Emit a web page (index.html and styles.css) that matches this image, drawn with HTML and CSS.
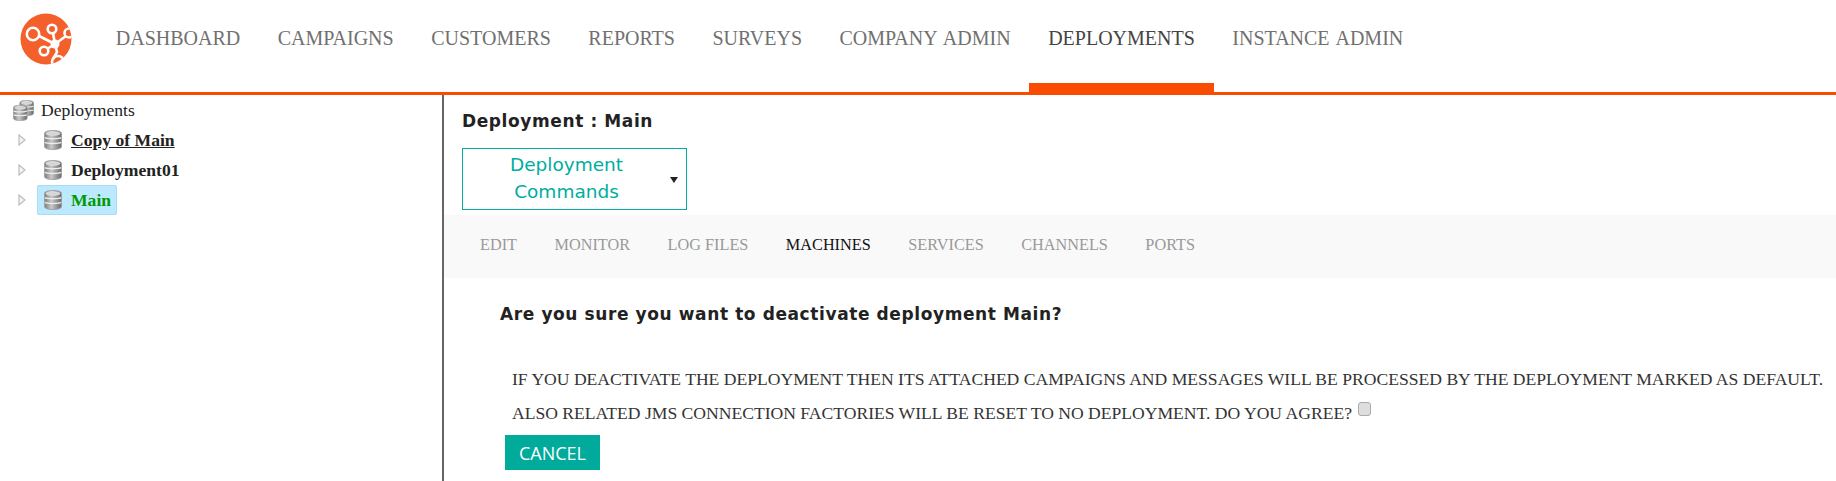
FILE: index.html
```html
<!doctype html>
<html lang="en">
<head>
    <meta charset="UTF-8">
    <title>Deployments</title>
    <link rel="stylesheet" href="styles.css">
</head>
<body>
    <svg width="0" height="0" class="defs">
        <defs>
            <linearGradient id="dbGrad" x1="0" x2="1" y1="0" y2="0">
                <stop offset="0" stop-color="#7c7c7c"/>
                <stop offset="0.4" stop-color="#c9c9c9"/>
                <stop offset="1" stop-color="#6a6a6a"/>
            </linearGradient>
            <g id="dbIcon">
                <path d="M.5 3.500C.5 1.500 4 .5 9 .5s8.500 1 8.500 3v13c0 2-3.500 3-8.500 3s-8.500-1-8.500-3z" fill="url(#dbGrad)" stroke="#9a9a9a" stroke-width=".8"/>
                <ellipse cx="9" cy="3.500" rx="7" ry="1.800" fill="#d4d4d4" stroke="#eee" stroke-width=".6"/>
                <path d="M1 7.600c1.500 1.600 14.500 1.600 16 0M1 12.300c1.500 1.600 14.500 1.600 16 0" fill="none" stroke="#ececec" stroke-width="1.500"/>
            </g>
            <polygon id="treeArrow" points="1,1 7,6 1,11" fill="#f4f4f4" stroke="#bdbdbd" stroke-width="1.200"/>
        </defs>
    </svg>

    <header class="topbar">
        <div class="logo">
            <svg width="52" height="52" viewBox="0 0 52 52">
                <defs><clipPath id="logoClip"><circle cx="26" cy="26" r="25.500"/></clipPath></defs>
                <circle cx="26" cy="26" r="25.500" fill="#f4602c"/>
                <g clip-path="url(#logoClip)" fill="none" stroke="#fff" stroke-width="2.600">
                    <path d="M19 23L35 31M35 31L33 20M35 31L27 36M35 31L46 23M35 31L37 39L33 46"/>
                    <circle cx="13" cy="21" r="6.200"/>
                    <circle cx="32" cy="16" r="4.300"/>
                    <circle cx="24" cy="38" r="4.300"/>
                    <circle cx="49" cy="20" r="4.500"/>
                    <circle cx="38" cy="49" r="6"/>
                </g>
                <circle cx="35" cy="31" r="4.500" fill="#fff"/>
            </svg>
        </div>
        <nav class="main-nav">
            <a href="#">DASHBOARD</a>
            <a href="#">CAMPAIGNS</a>
            <a href="#">CUSTOMERS</a>
            <a href="#">REPORTS</a>
            <a href="#">SURVEYS</a>
            <a href="#">COMPANY ADMIN</a>
            <a href="#" class="active">DEPLOYMENTS</a>
            <a href="#">INSTANCE ADMIN</a>
        </nav>
    </header>

    <div class="layout">
        <aside class="tree">
            <div class="tree-root">
                <svg class="db-stack" width="21" height="21" viewBox="0 0 26 26">
                    <use href="#dbIcon" x="8" y="0"/>
                    <use href="#dbIcon" x="0" y="6"/>
                </svg>
                <span>Deployments</span>
            </div>
            <div class="tree-row">
                <svg class="arrow" width="8" height="12" viewBox="0 0 8 12"><use href="#treeArrow"/></svg>
                <span class="node">
                    <svg width="18" height="20" viewBox="0 0 18 20"><use href="#dbIcon"/></svg>
                    <a href="#" class="underlined">Copy of Main</a>
                </span>
            </div>
            <div class="tree-row">
                <svg class="arrow" width="8" height="12" viewBox="0 0 8 12"><use href="#treeArrow"/></svg>
                <span class="node">
                    <svg width="18" height="20" viewBox="0 0 18 20"><use href="#dbIcon"/></svg>
                    <a href="#">Deployment01</a>
                </span>
            </div>
            <div class="tree-row">
                <svg class="arrow" width="8" height="12" viewBox="0 0 8 12"><use href="#treeArrow"/></svg>
                <span class="node selected">
                    <svg width="18" height="20" viewBox="0 0 18 20"><use href="#dbIcon"/></svg>
                    <a href="#">Main</a>
                </span>
            </div>
        </aside>

        <main class="content">
            <h2 class="page-title">Deployment : Main</h2>
            <button class="commands">
                <span class="commands-label">Deployment Commands</span>
                <span class="caret"></span>
            </button>
            <div class="tabs">
                <a href="#">EDIT</a>
                <a href="#">MONITOR</a>
                <a href="#">LOG FILES</a>
                <a href="#" class="active">MACHINES</a>
                <a href="#">SERVICES</a>
                <a href="#">CHANNELS</a>
                <a href="#">PORTS</a>
            </div>
            <div class="confirm">
                <h3>Are you sure you want to deactivate deployment Main?</h3>
                <p>IF YOU DEACTIVATE THE DEPLOYMENT THEN ITS ATTACHED CAMPAIGNS AND MESSAGES WILL BE PROCESSED BY THE DEPLOYMENT MARKED AS DEFAULT.</p>
                <p>ALSO RELATED JMS CONNECTION FACTORIES WILL BE RESET TO NO DEPLOYMENT. DO YOU AGREE? <input type="checkbox"></p>
                <button class="cancel">CANCEL</button>
            </div>
        </main>
    </div>
</body>
</html>
```

FILE: styles.css
```css
html, body {
    height: 100%;
}
body {
    margin: 0;
    display: flex;
    flex-direction: column;
    overflow: hidden;
    background-color: white;
    font-family: 'Liberation Serif', serif;
    color: #222;
}
a {
    color: inherit;
    text-decoration: none;
}
.defs {
    display: block;
    height: 0;
}
.topbar {
    display: flex;
    height: 95px;
    box-sizing: border-box;
    flex-shrink: 0;
    border-bottom: 3px solid #f94c00;
}
.logo {
    width: 97px;
    padding: 13px 0 0 20px;
    box-sizing: border-box;
}
.main-nav {
    display: flex;
}
.main-nav a {
    height: 83px;
    padding: 25px 18.75px 0;
    box-sizing: border-box;
    font-size: 20px;
    line-height: 26px;
    word-spacing: 2px;
    color: #707070;
}
.main-nav a.active {
    height: 92px;
    color: #444;
    border-bottom: 9px solid #f94c00;
}
.layout {
    display: flex;
    flex: 1;
    min-height: 0;
}
.tree {
    width: 444px;
    flex-shrink: 0;
    box-sizing: border-box;
    padding: 5px 0 0 12px;
    border-right: 2px solid #666;
    font-size: 17.6px;
}
.tree-root {
    display: flex;
    align-items: center;
    gap: 7px;
    height: 20px;
    margin: 0 0 5px 1px;
}
.db-stack {
    display: block;
}
.tree-row {
    display: flex;
    align-items: center;
    height: 30px;
}
.arrow {
    display: block;
    margin: 0 11px 0 6px;
}
.node {
    display: flex;
    align-items: center;
    gap: 9px;
    height: 30px;
    box-sizing: border-box;
    padding: 0 0 0 6px;
    font-weight: bold;
    border: 1px solid transparent;
    border-radius: 2px;
}
.node svg {
    display: block;
}
.node .underlined {
    text-decoration: underline;
}
.node.selected {
    padding-right: 5px;
    background-color: #bde9ff;
    border-color: #a8dcf5;
    color: #009900;
}
.content {
    flex: 1;
    min-width: 0;
}
.page-title {
    margin: 0;
    padding: 14px 0 0 18px;
    font-family: 'DejaVu Sans', sans-serif;
    font-size: 17px;
    line-height: 24px;
    letter-spacing: 0.6px;
    color: #222;
}
.commands {
    display: flex;
    align-items: center;
    width: 225px;
    height: 62px;
    margin: 15px 0 5px 18px;
    padding: 0 8px 2px 0;
    box-sizing: border-box;
    background: white;
    border: 1px solid #00ada0;
    font-family: 'DejaVu Sans', sans-serif;
    font-size: 18.5px;
    line-height: 27px;
    color: #00ada0;
}
.commands-label {
    flex: 1;
    padding: 0 30px;
    text-align: center;
}
.caret {
    width: 0;
    height: 0;
    margin-top: 4px;
    border-top: 6px solid #222;
    border-left: 4px solid transparent;
    border-right: 4px solid transparent;
}
.tabs {
    display: flex;
    gap: 37.5px;
    height: 63px;
    padding: 0 0 0 36px;
    background-color: #f9f9f9;
    font-size: 16.25px;
    line-height: 61px;
    color: #999;
}
.tabs a.active {
    color: #111;
}
.confirm {
    padding: 0 0 0 56px;
}
.confirm h3 {
    margin: 0 0 41px;
    padding-top: 24px;
    font-family: 'DejaVu Sans', sans-serif;
    font-size: 17px;
    line-height: 24px;
    letter-spacing: 0.6px;
    color: #222;
}
.confirm p {
    height: 24px;
    margin: 0 0 10px 12px;
    font-size: 17.6px;
    line-height: 24px;
    white-space: nowrap;
    color: #333;
}
.confirm input {
    appearance: none;
    width: 13px;
    height: 14px;
    margin: 0 0 0 2px;
    vertical-align: 3px;
    background-color: #dedede;
    border: 1px solid #aaa;
    border-radius: 3px;
}
.cancel {
    display: block;
    width: 95px;
    height: 35px;
    margin-left: 5px;
    padding: 0;
    border: none;
    background-color: #00ab9c;
    color: white;
    font-family: 'Open Sans', sans-serif;
    font-size: 18px;
}
```
